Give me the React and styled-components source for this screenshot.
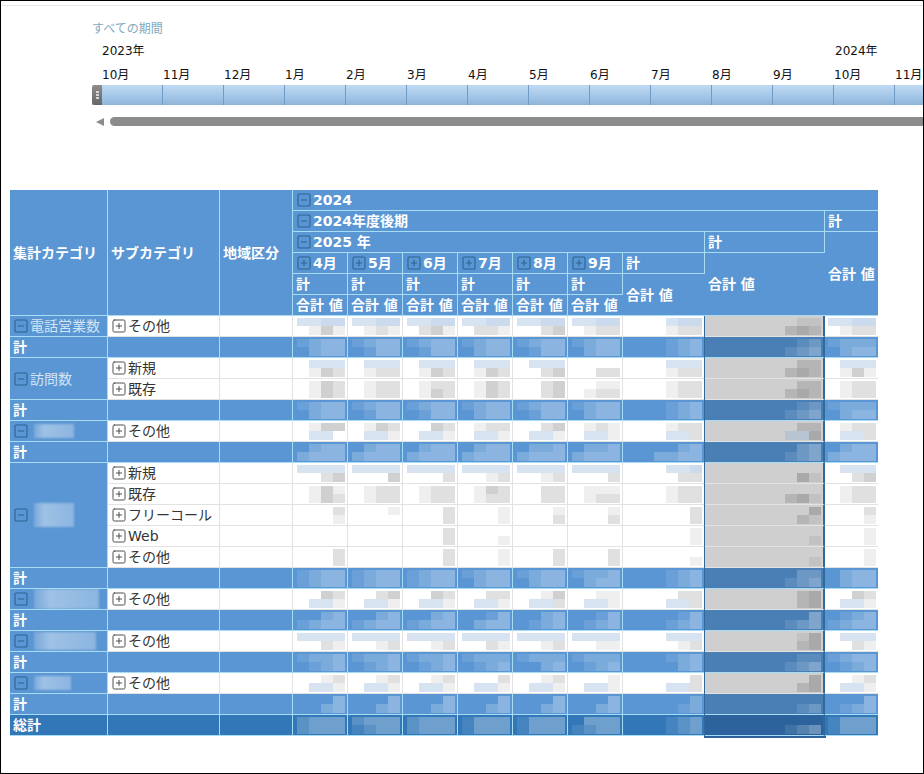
import React from "react";
import styled, { createGlobalStyle } from "styled-components";
import { SquareMinus, SquarePlus } from "lucide-react";

const FONT = `"DejaVu Sans", "Noto Sans CJK JP", sans-serif`;

const GlobalStyle = createGlobalStyle`
  html, body {
    margin: 0;
    padding: 0;
    background: #fff;
  }
  body {
    font-family: ${FONT};
    overflow: hidden;
  }
`;

const Frame = styled.div`
  width: 924px;
  height: 774px;
  box-sizing: border-box;
  border: 1px solid #000;
  overflow: hidden;
`;

const TopRule = styled.div`
  height: 1px;
  margin-top: 4px;
  background: #e8e8e8;
`;

const Timeline = styled.section`
  margin-left: 91px;
`;

const Title = styled.div`
  height: 16px;
  margin-top: 15px;
  line-height: 16px;
  font-size: 12px;
  color: #7ea9bf;
`;

const YearRow = styled.div`
  display: flex;
  height: 16px;
  margin-top: 6px;
  padding-left: 10px;
  line-height: 16px;
  font-size: 12px;
  color: #111;
`;

const Year = styled.div`
  flex: 0 0 733px;
`;

const MonthRow = styled(YearRow)`
  margin-top: 8px;
`;

const Month = styled.div`
  flex: 0 0 61px;
`;

const Bar = styled.div`
  position: relative;
  display: flex;
  height: 20px;
  margin-top: 2px;
  padding-left: 10px;
  background: linear-gradient(#c0daf2, #a9cbea 45%, #8eb5da);
`;

const Tick = styled.div`
  flex: 0 0 61px;
  box-sizing: border-box;
  border-right: 1px solid #6f9cc4;
`;

const Handle = styled.div`
  position: absolute;
  left: 0;
  top: 0;
  display: flex;
  flex-direction: column;
  align-items: center;
  justify-content: center;
  gap: 1px;
  width: 10px;
  height: 20px;
  border-radius: 3px 0 0 3px;
  background: linear-gradient(#8d8d8d, #666);
`;

const HandleDot = styled.span`
  width: 3px;
  height: 2px;
  background: #d5d5d5;
`;

const ScrollRow = styled.div`
  display: flex;
  align-items: center;
  gap: 6px;
  height: 9px;
  margin-top: 12px;
  padding-left: 4px;
`;

const ScrollArrow = styled.span`
  width: 0;
  height: 0;
  border-top: 4px solid transparent;
  border-bottom: 4px solid transparent;
  border-right: 8px solid #8c8c8c;
`;

const ScrollThumb = styled.div`
  flex: 1;
  height: 9px;
  border-radius: 5px 0 0 5px;
  background: #8c8c8c;
`;

const Table = styled.table`
  width: 868px;
  margin: 64px 0 0 9px;
  table-layout: fixed;
  border-collapse: separate;
  border-spacing: 0;
  font-size: 14px;
  line-height: 18px;
`;

const HeadCell = styled.th`
  height: 21px;
  box-sizing: border-box;
  padding: 0 0 0 3px;
  border-right: 1px solid #a6dcf4;
  border-bottom: 1px solid #a6dcf4;
  background: #5a96d3;
  color: #fff;
  font-weight: 700;
  text-align: left;
  white-space: nowrap;
  overflow: hidden;

  &:last-child {
    border-right: 0;
  }
`;

const HeadLabel = styled.span`
  display: flex;
  align-items: center;
  gap: 1px;

  svg {
    color: #2c6291;
  }
`;

const tones = {
  white: { bg: "#fff", hot: "#cfcfcf", line: "#e2e2e2", text: "#333" },
  blue: { bg: "#5a96d3", hot: "#4a7fb6", line: "#a6dcf4", text: "#fff" },
  total: { bg: "#3277b8", hot: "#2c639c", line: "#a6dcf4", text: "#fff" },
};

const Cell = styled.td`
  height: 21px;
  box-sizing: border-box;
  padding: 0;
  border-right: 1px solid ${(p) => tones[p.$tone].line};
  border-bottom: 1px solid ${(p) => tones[p.$tone].line};
  background: ${(p) => (p.$hot ? tones[p.$tone].hot : tones[p.$tone].bg)};
  color: ${(p) => tones[p.$tone].text};
  vertical-align: middle;
  white-space: nowrap;
  overflow: hidden;

  &:last-child {
    border-right: 0;
  }

  ${(p) =>
    p.$hot &&
    `
    overflow: visible;
    border-right: 2px solid #2f6a9c;
    box-shadow: -1px 0 0 #2f6a9c${p.$tone === "total" ? ", -1px 2px 0 #2c639c, 1px 2px 0 #2c639c" : ""};
  `}
`;

const LabelCell = styled(Cell)`
  padding-left: 3px;
  font-weight: ${(p) => (p.$bold ? 700 : 400)};
`;

const GroupCell = styled(Cell)`
  padding-left: 3px;
  border-color: #a6dcf4;
  background: #5a96d3;
  color: #d3e4f3;
`;

const Label = styled.span`
  display: flex;
  align-items: center;
  gap: 1px;

  svg {
    flex: none;
    color: ${(p) => (p.$onBlue ? "#2c6291" : "#444")};
  }
`;

const RedactedName = styled.span`
  display: block;
  flex: none;
  width: ${(p) => p.$w}px;
  height: ${(p) => p.$h}px;
  margin-left: 4px;
  filter: blur(1px);
  background: linear-gradient(90deg, rgba(255, 255, 255, 0.18), rgba(255, 255, 255, 0.42) 25%, rgba(255, 255, 255, 0.3));
`;

const Mosaic = styled.div`
  display: grid;
  grid-template-columns: repeat(4, 12px);
  grid-template-rows: 8px 9px;
  justify-content: end;
  padding-right: 2px;
  filter: blur(0.6px);
`;

const Tile = styled.span`
  background: ${(p) => p.$fill};
`;

// digits are greys (white veil on blue rows), letters the pale blue smears
const tileFill = (ch, tone, hot) => {
  if (ch === "0") return "transparent";
  if (ch >= "a") {
    const alpha = { a: 0.35, b: 0.45, c: 0.6 }[ch];
    return `rgba(140, 175, 215, ${alpha})`;
  }
  const n = Number(ch);
  if (tone !== "white") return `rgba(255, 255, 255, ${n * 0.1})`;
  return hot ? `rgba(90, 90, 90, ${n * 0.11})` : `rgba(100, 100, 100, ${n * 0.1})`;
};

const Values = ({ code, tone, hot }) => (
  <Mosaic>
    {code.split("").map((ch, i) => (
      <Tile key={i} $fill={tileFill(ch, tone, hot)} />
    ))}
  </Mosaic>
);

const widths = [98, 112, 73, 55, 55, 55, 55, 55, 55, 82, 120, 53];
const months = ["4月", "5月", "6月", "7月", "8月", "9月"];
const timelineMonths = ["10月", "11月", "12月", "1月", "2月", "3月", "4月", "5月", "6月", "7月", "8月", "9月", "10月", "11月"];

const groups = [
  {
    name: "電話営業数",
    subs: [["その他", "aabb0131 aabb0121 aabb0231 aabb0221 aabb0023 aabb0122 0abb0122 00110232 aabb0122"]],
    total: "12330233 12330133 12330133 12330233 12330133 12330233 01230123 00120123 12220233",
  },
  {
    name: "訪問数",
    subs: [
      ["新規", "0aaa0132 0aaa0122 0aaa0132 0aaa0132 0aaa0023 00000022 0aaa0122 00220232 0aaa0131"],
      ["既存", "01320132 01220122 01220132 01320132 00230023 00110122 01220122 00220232 01220122"],
    ],
    total: "12330233 12330133 12330133 12330233 12330133 12330233 01230123 00120123 12220233",
  },
  {
    redacted: [40, 14],
    subs: [["その他", "01330aa0 01320aa1 00320aa1 01220aa1 00230aa1 01210aa1 01220aa2 00220aa3 01220aa2"]],
    total: "02332333 02332333 02332333 02332333 02232333 02232333 00232233 00230123 02332333",
  },
  {
    redacted: [40, 24],
    subs: [
      ["新規", "aaaa0023 aaaa0003 aaaa0002 aaaa0012 aaaa0012 aaaa0002 0aab0022 00000031 0aaa0023"],
      ["既存", "01310132 01220122 01220122 01320122 00220022 01110122 01220122 00000231 01220122"],
      ["フリーコール", "00020001 00010000 00020002 00010001 00010002 00010002 00020002 00030021 00020001"],
      ["Web", "00000000 00000000 00020002 00000001 00000000 00000000 00010001 00000001 00010001"],
      ["その他", "00020002 00000000 00020002 00010001 00020002 00020002 00000001 00000001 00010001"],
    ],
    total: "12331233 12331233 12331233 12330233 12330233 12230233 01230123 00220123 02330233",
  },
  {
    redacted: [65, 20],
    subs: [["その他", "00320aa1 00230aa1 00320aa1 00220aa1 00130aa2 00110aa1 00220aa2 00230023 00320aa1"]],
    total: "00231233 00231233 00231233 00130233 00230123 00130123 00130123 00030123 01231233",
  },
  {
    redacted: [62, 18],
    subs: [["その他", "aaaa0021 aaaa0012 aaaa0012 aaaa0021 aaaa0012 aaaa0011 0aaa0012 00130023 0aaa0021"]],
    total: "12230123 12230123 12230123 12220123 12220023 12220123 01230023 00110123 12330123",
  },
  {
    redacted: [37, 14],
    subs: [["その他", "00120aa1 00120aa1 00120aa1 00020aa1 00120aa1 00010aa1 00020aa2 00030023 00120aa1"]],
    total: "00030023 00030023 00030023 00030023 00030023 00030023 00020012 00000012 00030123",
  },
];

const grandTotal = "23332333 23331233 23332333 13331333 13331333 03331233 01230123 00000123 13331333";

const ValueCells = ({ codes, tone }) =>
  codes.split(" ").map((code, i) => (
    <Cell key={i} $tone={tone} $hot={i === 7}>
      <Values code={code} tone={tone} hot={i === 7} />
    </Cell>
  ));

const TotalRow = ({ label, codes, tone }) => (
  <tr>
    <LabelCell $tone={tone} $bold>
      {label}
    </LabelCell>
    <Cell $tone={tone} />
    <Cell $tone={tone} />
    <ValueCells codes={codes} tone={tone} />
  </tr>
);

const GroupRows = ({ group }) => (
  <>
    {group.subs.map(([label, codes], i) => (
      <tr key={label}>
        {i === 0 && (
          <GroupCell $tone="blue" rowSpan={group.subs.length}>
            <Label $onBlue>
              <SquareMinus size={16} strokeWidth={1.6} />
              {group.name || <RedactedName $w={group.redacted[0]} $h={group.redacted[1]} />}
            </Label>
          </GroupCell>
        )}
        <LabelCell $tone="white">
          <Label>
            <SquarePlus size={16} strokeWidth={1.4} />
            {label}
          </Label>
        </LabelCell>
        <Cell $tone="white" />
        <ValueCells codes={codes} tone="white" />
      </tr>
    ))}
    <TotalRow label="計" codes={group.total} tone="blue" />
  </>
);

export default function App() {
  return (
    <>
      <GlobalStyle />
      <Frame>
        <TopRule />
        <Timeline>
          <Title>すべての期間</Title>
          <YearRow>
            <Year>2023年</Year>
            <Year>2024年</Year>
          </YearRow>
          <MonthRow>
            {timelineMonths.map((m, i) => (
              <Month key={i}>{m}</Month>
            ))}
          </MonthRow>
          <Bar>
            <Handle>
              <HandleDot />
              <HandleDot />
              <HandleDot />
            </Handle>
            {timelineMonths.map((m, i) => (
              <Tick key={i} />
            ))}
          </Bar>
          <ScrollRow>
            <ScrollArrow />
            <ScrollThumb />
          </ScrollRow>
        </Timeline>
        <Table>
          <colgroup>
            {widths.map((w, i) => (
              <col key={i} style={{ width: w }} />
            ))}
          </colgroup>
          <thead>
            <tr>
              <HeadCell rowSpan={6}>集計カテゴリ</HeadCell>
              <HeadCell rowSpan={6}>サブカテゴリ</HeadCell>
              <HeadCell rowSpan={6}>地域区分</HeadCell>
              <HeadCell colSpan={9}>
                <HeadLabel>
                  <SquareMinus size={16} strokeWidth={1.6} />
                  2024
                </HeadLabel>
              </HeadCell>
            </tr>
            <tr>
              <HeadCell colSpan={8}>
                <HeadLabel>
                  <SquareMinus size={16} strokeWidth={1.6} />
                  2024年度後期
                </HeadLabel>
              </HeadCell>
              <HeadCell>計</HeadCell>
            </tr>
            <tr>
              <HeadCell colSpan={7}>
                <HeadLabel>
                  <SquareMinus size={16} strokeWidth={1.6} />
                  2025 年
                </HeadLabel>
              </HeadCell>
              <HeadCell>計</HeadCell>
              <HeadCell rowSpan={4}>合計 値</HeadCell>
            </tr>
            <tr>
              {months.map((m) => (
                <HeadCell key={m}>
                  <HeadLabel>
                    <SquarePlus size={16} strokeWidth={1.6} />
                    {m}
                  </HeadLabel>
                </HeadCell>
              ))}
              <HeadCell>計</HeadCell>
              <HeadCell rowSpan={3}>合計 値</HeadCell>
            </tr>
            <tr>
              {months.map((m) => (
                <HeadCell key={m}>計</HeadCell>
              ))}
              <HeadCell rowSpan={2}>合計 値</HeadCell>
            </tr>
            <tr>
              {months.map((m) => (
                <HeadCell key={m}>合計 値</HeadCell>
              ))}
            </tr>
          </thead>
          <tbody>
            {groups.map((group, i) => (
              <GroupRows key={i} group={group} />
            ))}
            <TotalRow label="総計" codes={grandTotal} tone="total" />
          </tbody>
        </Table>
      </Frame>
    </>
  );
}
